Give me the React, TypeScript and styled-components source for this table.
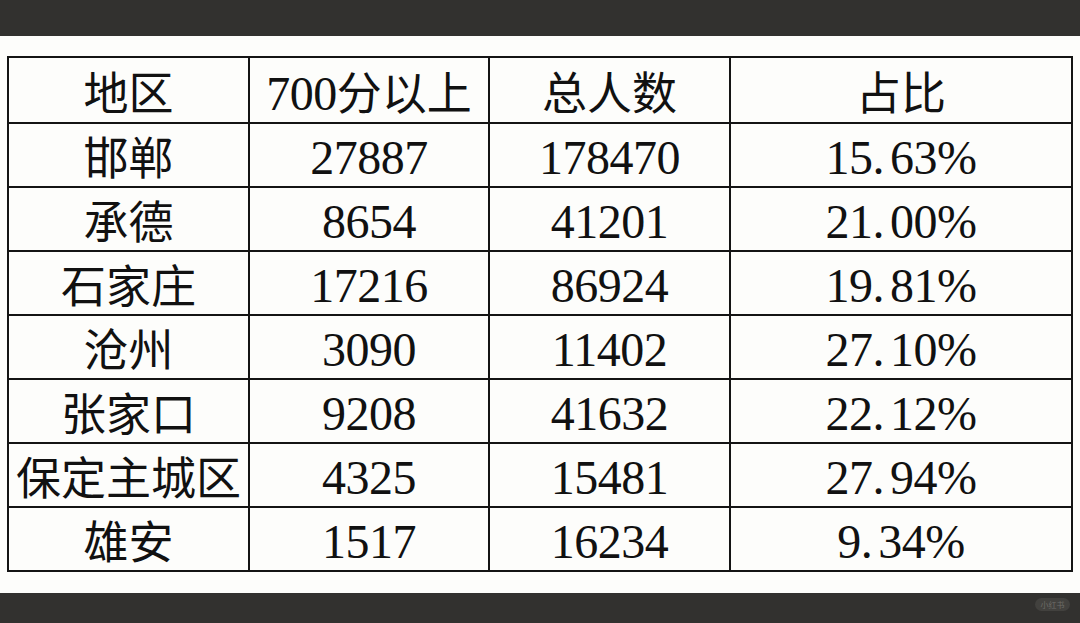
import React from "react";
import styled, { createGlobalStyle } from "styled-components";

const Global = createGlobalStyle`
  html, body { margin: 0; padding: 0; background: #fdfdfb; }
  body { width: 1080px; height: 623px; overflow: hidden; }
`;

const Page = styled.div`
  width: 1080px;
  height: 623px;
  display: flex;
  flex-direction: column;
  background: #fdfdfb;
`;

const TopBar = styled.div`
  height: 36px;
  flex: none;
  background: #32312f;
`;

const Sheet = styled.div`
  flex: 1;
  padding: 20px 0 0 7px;
  box-sizing: border-box;
`;

const BottomBar = styled.div`
  height: 30px;
  flex: none;
  background: #32312f;
  display: flex;
  justify-content: flex-end;
  align-items: flex-start;
  padding: 5px 10px 0 0;
  box-sizing: border-box;
`;

const Watermark = styled.span`
  display: inline-flex;
  align-items: center;
  justify-content: center;
  width: 35px;
  height: 13px;
  border-radius: 7px;
  background: #42413e;
  color: #6d6c68;
  font-family: "Noto Sans CJK SC", sans-serif;
  font-size: 8px;
  line-height: 1;
`;

const Table = styled.table`
  border-collapse: collapse;
  table-layout: fixed;
  width: 1066px;
  color: #111;
  font-family: "Liberation Serif", "Noto Sans CJK SC", serif;
  font-size: 48px;
`;

const Row = styled.tr<{ $h: number }>`
  height: ${(p) => p.$h}px;
`;

const Cell = styled.td`
  border: 2px solid #141414;
  padding: 6px 0 0 0;
  text-align: center;
  vertical-align: middle;
  line-height: 1;
  white-space: nowrap;
  overflow: visible;
  letter-spacing: -0.5px;
`;

const Zh = styled.span`
  font-family: "Noto Sans CJK SC", sans-serif;
  font-size: 45px;
  font-weight: 400;
  letter-spacing: 0;
`;

const Dot = styled.span`
  margin-right: 6px;
`;

const rows: [string, string, string, string][] = [
  ["邯郸", "27887", "178470", "15.63%"],
  ["承德", "8654", "41201", "21.00%"],
  ["石家庄", "17216", "86924", "19.81%"],
  ["沧州", "3090", "11402", "27.10%"],
  ["张家口", "9208", "41632", "22.12%"],
  ["保定主城区", "4325", "15481", "27.94%"],
  ["雄安", "1517", "16234", "9.34%"],
];

function Percent({ v }: { v: string }) {
  const [a, b] = v.split(".");
  return (
    <>
      {a}
      <Dot>.</Dot>
      {b}
    </>
  );
}

export default function App() {
  return (
    <>
      <Global />
      <Page>
        <TopBar />
        <Sheet>
          <Table>
            <colgroup>
              <col style={{ width: 241 }} />
              <col style={{ width: 240 }} />
              <col style={{ width: 241 }} />
              <col />
            </colgroup>
            <tbody>
              <Row $h={66}>
                <Cell><Zh>地区</Zh></Cell>
                <Cell>700<Zh>分以上</Zh></Cell>
                <Cell><Zh>总人数</Zh></Cell>
                <Cell><Zh>占比</Zh></Cell>
              </Row>
              {rows.map((r) => (
                <Row $h={64} key={r[0]}>
                  <Cell><Zh>{r[0]}</Zh></Cell>
                  <Cell>{r[1]}</Cell>
                  <Cell>{r[2]}</Cell>
                  <Cell><Percent v={r[3]} /></Cell>
                </Row>
              ))}
            </tbody>
          </Table>
        </Sheet>
        <BottomBar>
          <Watermark>小红书</Watermark>
        </BottomBar>
      </Page>
    </>
  );
}
